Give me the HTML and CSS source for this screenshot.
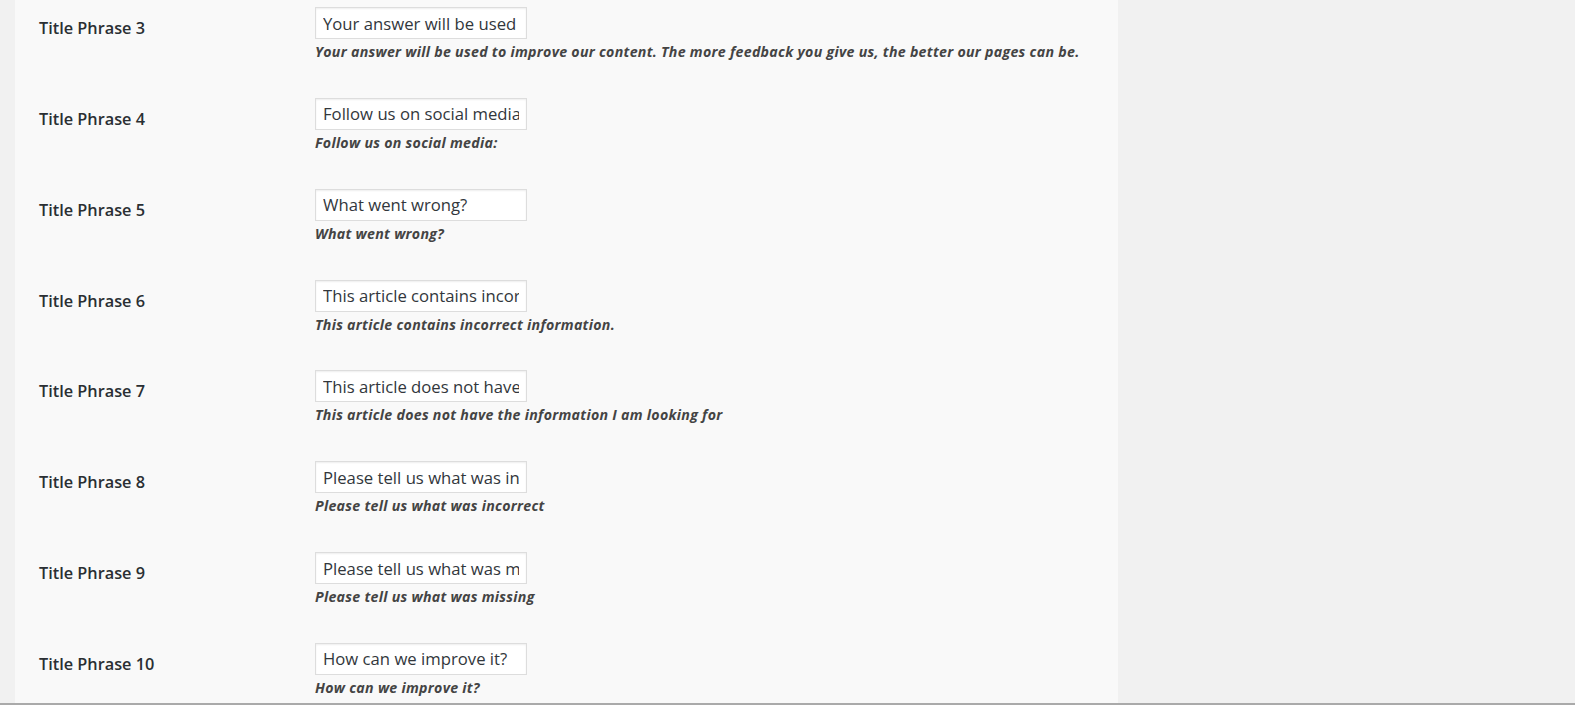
FILE: index.html
```html
<!DOCTYPE html>
<html>
<head>
<meta charset="utf-8">
<link rel="stylesheet" href="styles.css">
</head>
<body>
<div class="page">
  <div class="panel">
    <div class="table">
      <div class="row">
        <div class="label">Title Phrase 3</div>
        <div class="field">
          <input class="text" type="text" value="Your answer will be used to improve our content. The more feedback you give us, the better our pages can be.">
          <p class="desc">Your answer will be used to improve our content. The more feedback you give us, the better our pages can be.</p>
        </div>
      </div>
      <div class="row">
        <div class="label">Title Phrase 4</div>
        <div class="field">
          <input class="text" type="text" value="Follow us on social media:">
          <p class="desc">Follow us on social media:</p>
        </div>
      </div>
      <div class="row">
        <div class="label">Title Phrase 5</div>
        <div class="field">
          <input class="text" type="text" value="What went wrong?">
          <p class="desc">What went wrong?</p>
        </div>
      </div>
      <div class="row">
        <div class="label">Title Phrase 6</div>
        <div class="field">
          <input class="text" type="text" value="This article contains incorrect information.">
          <p class="desc">This article contains incorrect information.</p>
        </div>
      </div>
      <div class="row">
        <div class="label">Title Phrase 7</div>
        <div class="field">
          <input class="text" type="text" value="This article does not have the information I am looking for">
          <p class="desc">This article does not have the information I am looking for</p>
        </div>
      </div>
      <div class="row">
        <div class="label">Title Phrase 8</div>
        <div class="field">
          <input class="text" type="text" value="Please tell us what was incorrect">
          <p class="desc">Please tell us what was incorrect</p>
        </div>
      </div>
      <div class="row">
        <div class="label">Title Phrase 9</div>
        <div class="field">
          <input class="text" type="text" value="Please tell us what was missing">
          <p class="desc">Please tell us what was missing</p>
        </div>
      </div>
      <div class="row">
        <div class="label">Title Phrase 10</div>
        <div class="field">
          <input class="text" type="text" value="How can we improve it?">
          <p class="desc">How can we improve it?</p>
        </div>
      </div>
    </div>
  </div>
</div>
</body>
</html>
```

FILE: styles.css
```css
html, body {
  margin: 0;
  padding: 0;
  height: 100%;
  overflow: hidden;
  background: #f1f1f1;
}
.page {
  height: 703px;
  border-bottom: 2px solid #aaaaaa;
  display: flex;
  overflow: hidden;
}
.panel {
  margin-left: 15px;
  width: 1103px;
  background: #f9f9f9;
  overflow: hidden;
}
.table {
  margin-top: -8px;
  padding-left: 24px;
  display: flex;
  flex-direction: column;
}
.row {
  display: flex;
  height: 90.85px;
  box-sizing: border-box;
  padding-top: 15px;
}
.label {
  width: 276px;
  flex: none;
  padding-top: 10px;
  font-family: "Open Sans", "Noto Sans", sans-serif;
  font-weight: 600;
  font-size: 16.3px;
  line-height: 22px;
  color: #2a2f33;
}
.field {
  display: flex;
  flex-direction: column;
  align-items: flex-start;
}
.text {
  box-sizing: border-box;
  width: 212px;
  height: 32px;
  margin: 0;
  padding: 0 7px;
  border: 1px solid #dddddd;
  box-shadow: inset 0 1px 2px rgba(0,0,0,0.07);
  background: #ffffff;
  font-family: "Open Sans", "Noto Sans", sans-serif;
  font-size: 16.7px;
  color: #32373c;
  outline: none;
}
.desc {
  margin: 3px 0 0 0;
  font-family: "Open Sans", "Noto Sans", sans-serif;
  font-weight: 700;
  font-style: italic;
  font-size: 14.2px;
  letter-spacing: 0.28px;
  line-height: 20px;
  color: #444444;
}
```
